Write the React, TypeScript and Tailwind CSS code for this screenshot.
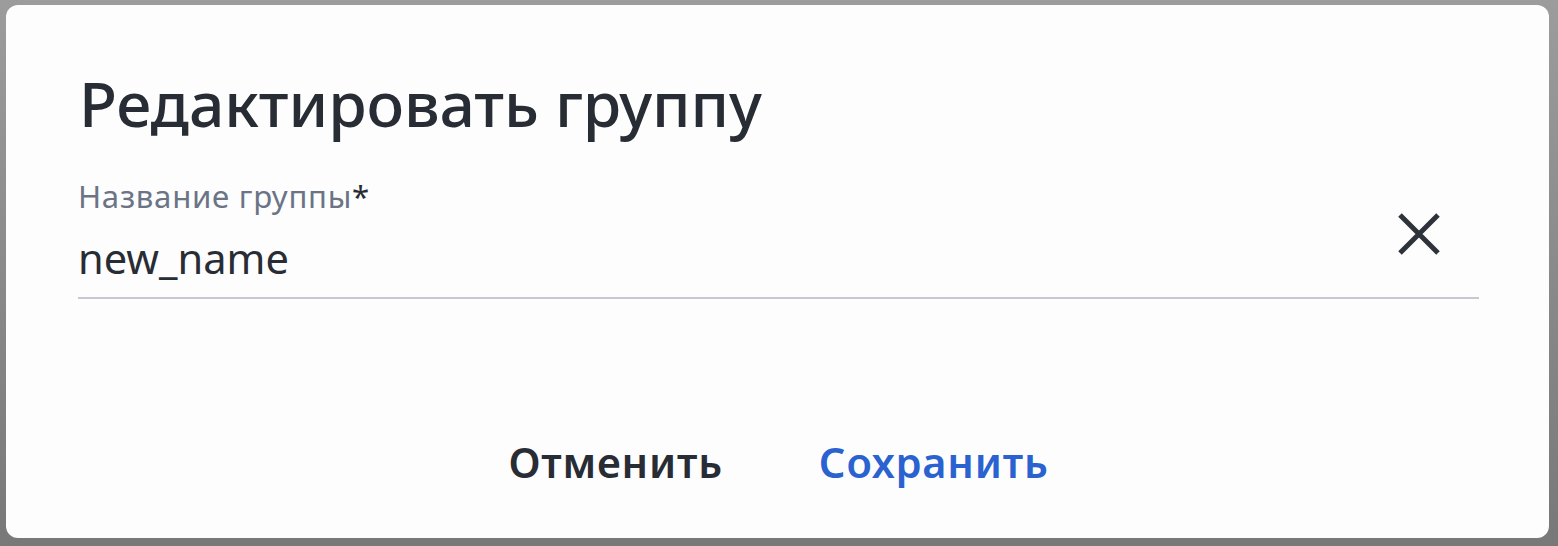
const App = () => {
  return (
    <div className="w-full h-[546px] bg-gradient-to-b from-[#9c9c9c] to-[#787878] pt-[5px] pl-[6px] pr-[9px] pb-[8px] font-['Noto_Sans',sans-serif]">
      <div className="h-full bg-[#fdfdfd] rounded-[12px] flex flex-col pl-[72px] pr-[70px]">
        <h1 className="mt-[61px] text-[62.4px] leading-[74px] font-[500] text-[#282c34] pl-[1px] tracking-[-0.1px]">Редактировать группу</h1>

        <div className="mt-[35px] flex flex-row items-center border-b-2 border-[#c6c9d2]">
          <div className="flex-1 flex flex-col">
            <label className="text-[31.2px] leading-[42px] text-[#6b7487] tracking-[0.7px]">
              Название группы<span className="text-[#282c34]">*</span>
            </label>
            <p className="mt-[16px] mb-[14px] text-[41.6px] leading-[50px] text-[#282c34]">new_name</p>
          </div>
          <button className="mr-[38px] mb-[4px] w-[44px] h-[44px] flex items-center justify-center">
            <svg width="44" height="44" viewBox="0 0 44 44">
              <path d="M3 3 L41 41 M41 3 L3 41" stroke="#2e323a" strokeWidth="5" strokeLinecap="butt" fill="none" />
            </svg>
          </button>
        </div>

        <div className="mt-[138px] flex flex-row justify-center gap-[96px]">
          <button className="text-[41.6px] leading-[50px] font-[600] tracking-[0.8px] text-[#282c34]">Отменить</button>
          <button className="text-[41.6px] leading-[50px] font-[600] tracking-[0.8px] text-[#2a62d0]">Сохранить</button>
        </div>
      </div>
    </div>
  )
}

export default App
